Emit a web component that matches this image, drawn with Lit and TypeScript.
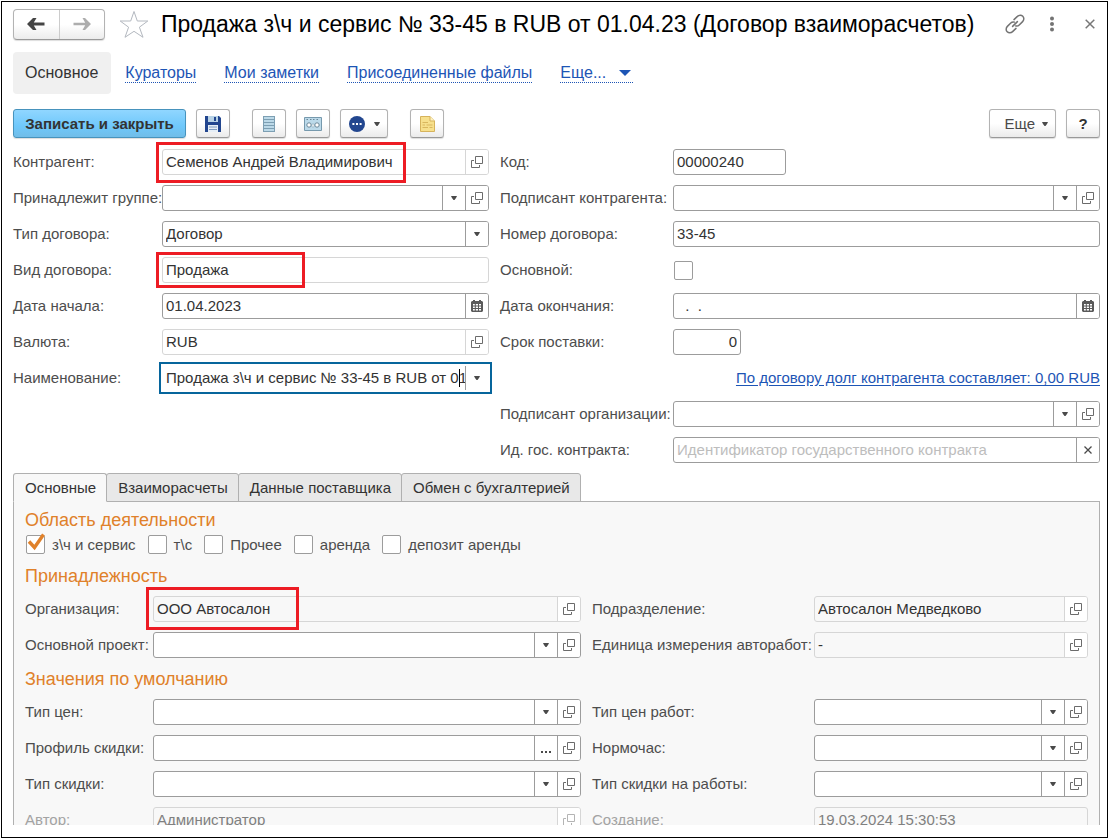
import { LitElement, html, css, nothing, TemplateResult } from "lit";
import { customElement, property, state } from "lit/decorators.js";
import { classMap } from "lit/directives/class-map.js";
import { styleMap } from "lit/directives/style-map.js";

type Part = "drop" | "open" | "calendar" | "dots" | "clear";

interface Mark {
  top: number;
  left: number;
  width: number;
  height: number;
}

interface FieldSpec {
  label: string;
  value?: string;
  kind?: "text" | "select" | "check" | "link";
  parts?: Part[];
  readonly?: boolean;
  disabled?: boolean;
  focused?: boolean;
  placeholder?: string;
  size?: "code" | "number";
  mark?: Mark;
}

const icons: Record<string, TemplateResult> = {
  drop: html`<svg width="6" height="4" viewBox="0 0 6 4" aria-hidden="true">
    <path d="M0 0H6L5 2L3.5 4H2.5L1 2Z" fill="#4a4a4a" />
  </svg>`,
  open: html`<svg width="12" height="12" viewBox="0 0 12 12" fill="none" stroke="#6b6b6b" aria-hidden="true">
    <path d="M4.5 .5H11.5V7.5H4.5ZM3 4.5H.5V11.5H8.5V9" />
  </svg>`,
  calendar: html`<svg width="12" height="12" viewBox="0 0 12 12" aria-hidden="true">
    <path d="M1 1H2V0H4V1H8V0H10V1H11L12 2V11L11 12H1L0 11V2Z" fill="#5a5a5a" />
    <path d="M2 4H10V5.5H2ZM2 6.5H10V8H2ZM2 9H10V10.5H2Z" fill="#fff" />
    <path d="M3.8 4H4.8V11H3.8ZM7 4H8V11H7Z" fill="#5a5a5a" />
  </svg>`,
  dots: html`<svg width="10" height="12" viewBox="0 0 10 12" fill="#4a4a4a" aria-hidden="true">
    <path d="M0 9H2V11H0ZM4 9H6V11H4ZM8 9H10V11H8Z" />
  </svg>`,
  clear: html`<svg width="8" height="8" viewBox="0 0 8 8" stroke="#4a4a4a" stroke-width="1.3" aria-hidden="true">
    <path d="M.5 .5L7.5 7.5M7.5 .5L.5 7.5" />
  </svg>`,
  back: html`<svg width="18" height="14" viewBox="0 0 18 14" aria-hidden="true">
    <path d="M0 7L6 1H9.5L6.8 5.5H17.5V8.5H6.8L9.5 13H6Z" fill="#444" />
  </svg>`,
  forward: html`<svg width="18" height="14" viewBox="0 0 18 14" aria-hidden="true">
    <path d="M18 7L12 1H9.5L12.2 5.7H.5V8.3H12.2L9.5 13H12Z" fill="#adadad" />
  </svg>`,
  star: html`<svg width="30" height="29" viewBox="0 0 30 29" aria-hidden="true">
    <path d="M15 1.5L18.3 11H28.8L20.4 17.2L24 27.3L15 21.3L6 27.3L9.6 17.2L1.2 11H11.7Z"
      fill="#fff" stroke="#b3b8bf" />
  </svg>`,
  chain: html`<svg width="20" height="20" viewBox="0 0 20 20" fill="none" stroke="#737373" stroke-width="1.5"
    stroke-linecap="round" aria-hidden="true">
    <path d="M9 5.6L12.4 2.4C14 .8 16.4 .8 17.8 2.2C19.2 3.6 19.2 6 17.6 7.6L14.2 11C13.2 12 11.8 12.3 10.6 11.9" />
    <path d="M11 14.4L7.6 17.6C6 19.2 3.6 19.2 2.2 17.8C.8 16.4 .8 14 2.4 12.4L5.8 9C6.8 8 8.2 7.7 9.4 8.1" />
    <path d="M7.6 12.4L12.4 7.6" />
  </svg>`,
  kebab: html`<svg width="6" height="16" viewBox="0 0 6 16" fill="#737373" aria-hidden="true">
    <circle cx="3" cy="2.5" r="2" /><circle cx="3" cy="8" r="2" /><circle cx="3" cy="13.5" r="2" />
  </svg>`,
  close: html`<svg width="10" height="10" viewBox="0 0 10 10" stroke="#777" stroke-width="1.5" aria-hidden="true">
    <path d="M.7 .7L9.3 9.3M9.3 .7L.7 9.3" />
  </svg>`,
  save: html`<svg width="16" height="16" viewBox="0 0 16 16" aria-hidden="true">
    <path d="M0 0H14L16 2V16H0Z" fill="#22468f" />
    <path d="M3 0H13V6H3Z" fill="#b9d3e6" />
    <path d="M9 1H11V5H9Z" fill="#22468f" />
    <path d="M3 9H13V16H3Z" fill="#e6eef6" />
    <path d="M4 10.5H12V11.5H4ZM4 13H12V14H4Z" fill="#7f9cbf" />
  </svg>`,
  stack: html`<svg width="12" height="16" viewBox="0 0 12 16" aria-hidden="true">
    <path d="M0 0H12V16H0Z" fill="#7d9fb3" />
    <path d="M1 1H11V3H1ZM1 4H11V6H1ZM1 7H11V9H1ZM1 10H11V12H1ZM1 13H11V15H1Z" fill="#bcd9e8" />
  </svg>`,
  cassette: html`<svg width="18" height="14" viewBox="0 0 18 14" aria-hidden="true">
    <path d="M.5 .5H17.5V13.5H.5Z" fill="#bcdaea" stroke="#7699ad" />
    <path d="M2.5 2.5H4M6 2.5H7.5M9 2.5H10.5M12.5 2.5H14" stroke="#6b8798" />
    <circle cx="5" cy="8" r="2.2" fill="#fff" stroke="#6b8798" />
    <circle cx="13" cy="8" r="2.2" fill="#fff" stroke="#6b8798" />
    <path d="M8 7H10V10H8Z" fill="#fff" stroke="#8aa9bb" stroke-width=".6" />
  </svg>`,
  more: html`<svg width="16" height="16" viewBox="0 0 16 16" aria-hidden="true">
    <circle cx="8" cy="8" r="8" fill="#22468f" />
    <path d="M3.4 7H5.4V9H3.4ZM7 7H9V9H7ZM10.6 7H12.6V9H10.6Z" fill="#fff" />
  </svg>`,
  note: html`<svg width="15" height="16" viewBox="0 0 15 16" aria-hidden="true">
    <path d="M.5 .5H10L14.5 5V15.5H.5Z" fill="#f7e08c" stroke="#d6b35c" />
    <path d="M10 .5V5H14.5" fill="#fff3c4" stroke="#d6b35c" />
    <path d="M2.5 6.5H8M2.5 9H5M6.5 9H12.5M2.5 11.5H8M9.5 11.5H12.5" stroke="#d9b75e" />
  </svg>`,
  menu: html`<svg width="12" height="6" viewBox="0 0 12 6" aria-hidden="true">
    <path d="M0 0H12L6 6Z" fill="#1d55b5" />
  </svg>`,
  tick: html`<svg width="18" height="19" viewBox="0 0 18 19" aria-hidden="true">
    <path d="M2 8.5L7.5 14.5L16.5 1.5" fill="none" stroke="#e0812a" stroke-width="3.4" />
  </svg>`,
};

const partTitles: Record<Part, string> = {
  drop: "Выбрать из списка",
  open: "Открыть",
  calendar: "Календарь",
  dots: "Выбрать",
  clear: "Очистить",
};

let lastId = 0;

@customElement("form-field")
export class FormField extends LitElement {
  @property({ attribute: false }) spec!: FieldSpec;

  private fieldId = `field-${++lastId}`;

  static styles = css`
    :host {
      display: flex;
      align-items: center;
      min-width: 0;
      height: 26px;
      font: 15px/24px "Liberation Sans", Arial, sans-serif;
      color: #333;
    }
    .label {
      flex: none;
      width: var(--label-width);
      color: #4d4d4d;
      white-space: nowrap;
    }
    .label.disabled {
      color: #a3a3a3;
    }
    .box {
      position: relative;
      display: flex;
      flex: 1;
      min-width: 0;
      height: 26px;
      box-sizing: border-box;
      border: 1px solid #9c9c9c;
      border-radius: 3px;
      background: #fff;
    }
    .box.code {
      flex: none;
      width: 113px;
    }
    .box.number {
      flex: none;
      width: 68px;
    }
    .box.number .control {
      text-align: right;
    }
    .box.readonly {
      border-color: #d6d6d6;
      background: transparent;
    }
    .box.focused {
      border-color: transparent;
      border-radius: 0;
      outline: 2px solid #06659c;
      outline-offset: 1px;
    }
    .box.focused .control {
      padding-right: 0;
    }
    .control {
      flex: 1;
      min-width: 0;
      height: 24px;
      margin: 0;
      padding: 0 3px;
      border: 0;
      outline: 0;
      appearance: none;
      background: transparent;
      font: inherit;
      color: inherit;
    }
    .control::placeholder {
      color: #bdbdbd;
      opacity: 1;
    }
    .box.disabled .control {
      color: #808080;
    }
    .part {
      display: flex;
      flex: none;
      align-items: center;
      justify-content: center;
      width: 23px;
      height: 24px;
      box-sizing: border-box;
      margin: 0;
      padding: 0;
      border: 0;
      border-left: 1px solid #9c9c9c;
      background: #fff;
    }
    .part:last-of-type {
      border-radius: 0 2px 2px 0;
    }
    .readonly .part {
      border-color: #d6d6d6;
    }
    .disabled .part svg {
      opacity: 0.5;
    }
    .mark {
      position: absolute;
      box-sizing: border-box;
      border: 3px solid #ed1c24;
      pointer-events: none;
    }
    .caret {
      position: absolute;
      top: 3px;
      right: 28px;
      width: 1px;
      height: 18px;
      background: #000;
    }
    .check {
      width: 19px;
      height: 19px;
      margin: 0;
      box-sizing: border-box;
      appearance: none;
      border: 1px solid #9c9c9c;
      border-radius: 2px;
      background: #fff;
    }
    .check-wrap {
      display: flex;
      padding-left: 1px;
    }
    .debt {
      margin-left: auto;
      color: #1d55b5;
      text-underline-offset: 2px;
      white-space: nowrap;
    }
  `;

  private renderPart(part: Part) {
    const decorative = part === "drop" && this.spec.kind === "select";
    return decorative
      ? html`<span class="part">${icons[part]}</span>`
      : html`<button class="part" type="button" aria-label=${partTitles[part]}>${icons[part]}</button>`;
  }

  private renderControl() {
    const s = this.spec;
    if (s.kind === "select") {
      return html`<select class="control" id=${this.fieldId}>
        <option>${s.value ?? ""}</option>
      </select>`;
    }
    return html`<input
      class="control"
      id=${this.fieldId}
      type="text"
      .value=${s.value ?? ""}
      placeholder=${s.placeholder ?? nothing}
      ?readonly=${s.readonly}
      ?disabled=${s.disabled}
    />`;
  }

  render() {
    const s = this.spec;
    if (s.kind === "link") return html`<a class="debt" href="#debt">${s.label}</a>`;
    const label = html`<label class=${classMap({ label: true, disabled: !!s.disabled })} for=${this.fieldId}
      >${s.label}</label
    >`;
    if (s.kind === "check") {
      return html`${label}<span class="check-wrap"><input class="check" id=${this.fieldId} type="checkbox" /></span>`;
    }
    const m = s.mark;
    return html`${label}
      <div
        class=${classMap({
          box: true,
          readonly: !!s.readonly || !!s.disabled,
          disabled: !!s.disabled,
          focused: !!s.focused,
          [s.size ?? "wide"]: true,
        })}
      >
        ${this.renderControl()}${(s.parts ?? []).map((p) => this.renderPart(p))}
        ${s.focused ? html`<span class="caret"></span>` : nothing}
        ${m
          ? html`<span
              class="mark"
              style=${styleMap({
                top: `${m.top}px`,
                left: `${m.left}px`,
                width: `${m.width}px`,
                height: `${m.height}px`,
              })}
            ></span>`
          : nothing}
      </div>`;
  }
}

const headLeft: FieldSpec[] = [
  {
    label: "Контрагент:",
    value: "Семенов Андрей Владимирович",
    readonly: true,
    parts: ["open"],
    mark: { top: -8, left: -7, width: 250, height: 41 },
  },
  { label: "Принадлежит группе:", kind: "select", parts: ["drop", "open"] },
  { label: "Тип договора:", kind: "select", value: "Договор", parts: ["drop"] },
  {
    label: "Вид договора:",
    value: "Продажа",
    readonly: true,
    mark: { top: -6, left: -7, width: 149, height: 36 },
  },
  { label: "Дата начала:", value: "01.04.2023", parts: ["calendar"] },
  { label: "Валюта:", value: "RUB", readonly: true, parts: ["open"] },
  {
    label: "Наименование:",
    value: "Продажа з\\ч и сервис № 33-45 в RUB от 01.04.23",
    focused: true,
    parts: ["drop"],
  },
];

const headRight: FieldSpec[] = [
  { label: "Код:", value: "00000240", size: "code" },
  { label: "Подписант контрагента:", kind: "select", parts: ["drop", "open"] },
  { label: "Номер договора:", value: "33-45" },
  { label: "Основной:", kind: "check" },
  { label: "Дата окончания:", value: "  .  .", parts: ["calendar"] },
  { label: "Срок поставки:", value: "0", size: "number" },
  { label: "По договору долг контрагента составляет: 0,00 RUB", kind: "link" },
  { label: "Подписант организации:", kind: "select", parts: ["drop", "open"] },
  { label: "Ид. гос. контракта:", placeholder: "Идентификатор государственного контракта", parts: ["clear"] },
];

const ownerLeft: FieldSpec[] = [
  {
    label: "Организация:",
    value: "ООО Автосалон",
    readonly: true,
    parts: ["open"],
    mark: { top: -10, left: -8, width: 153, height: 43 },
  },
  { label: "Основной проект:", kind: "select", parts: ["drop", "open"] },
];

const ownerRight: FieldSpec[] = [
  { label: "Подразделение:", value: "Автосалон Медведково", readonly: true, parts: ["open"] },
  { label: "Единица измерения авторабот:", value: "-", readonly: true, parts: ["open"] },
];

const defaultsLeft: FieldSpec[] = [
  { label: "Тип цен:", kind: "select", parts: ["drop", "open"] },
  { label: "Профиль скидки:", parts: ["dots", "open"] },
  { label: "Тип скидки:", kind: "select", parts: ["drop", "open"] },
  { label: "Автор:", value: "Администратор", disabled: true, parts: ["open"] },
];

const defaultsRight: FieldSpec[] = [
  { label: "Тип цен работ:", kind: "select", parts: ["drop", "open"] },
  { label: "Нормочас:", kind: "select", parts: ["drop", "open"] },
  { label: "Тип скидки на работы:", kind: "select", parts: ["drop", "open"] },
  { label: "Создание:", value: "19.03.2024 15:30:53", disabled: true },
];

const tabs = ["Основные", "Взаиморасчеты", "Данные поставщика", "Обмен с бухгалтерией"];
const links = ["Кураторы", "Мои заметки", "Присоединенные файлы"];
const areas = ["з\\ч и сервис", "т\\с", "Прочее", "аренда", "депозит аренды"];

@customElement("app-root")
export class AppRoot extends LitElement {
  @state() private activeTab = 0;
  @state() private checked = new Set<number>([0]);

  static styles = css`
    :host {
      display: block;
      height: 100vh;
      box-sizing: border-box;
      padding: 1px 0 1px 1px;
      background: #fff;
      font: 15px/24px "Liberation Sans", Arial, sans-serif;
      color: #333;
    }
    .window {
      display: flex;
      flex-direction: column;
      height: 100%;
      box-sizing: border-box;
      padding: 7px 7px 12px 11px;
      border: 1px solid #000;
    }
    button {
      font: inherit;
      color: inherit;
    }
    .header,
    .commands,
    .nav {
      display: flex;
      flex: none;
      align-items: center;
    }
    .header {
      height: 30px;
    }
    .history {
      display: flex;
      flex: none;
      width: 92px;
      height: 31px;
      box-sizing: border-box;
      border: 1px solid #b3b3b3;
      border-bottom-color: #999;
      border-radius: 4px;
      background: linear-gradient(#fff 50%, #ececec);
      box-shadow: 0 1px 1px #ddd;
    }
    .step {
      display: flex;
      flex: 1;
      align-items: center;
      justify-content: center;
      padding: 0;
      border: 0;
      background: none;
    }
    .step + .step {
      border-left: 1px solid #ccc;
    }
    .plain {
      display: flex;
      flex: none;
      align-items: center;
      justify-content: center;
      padding: 0;
      border: 0;
      background: none;
    }
    .favorite {
      margin: 0 12px 0 14px;
    }
    .title {
      flex: 1;
      min-width: 0;
      margin: 0;
      overflow: hidden;
      font-size: 23px;
      line-height: 30px;
      font-weight: 400;
      color: #000;
      white-space: nowrap;
    }
    .tools {
      display: flex;
      flex: none;
      align-items: center;
      gap: 24px;
      padding-right: 5px;
    }
    .tools .plain:last-child {
      margin-left: 6px;
    }
    .nav {
      gap: 28px;
      height: 42px;
      margin-top: 13px;
      font-size: 16px;
    }
    .current {
      margin-right: -14px;
      padding: 9px 13px 9px 12px;
      border-radius: 4px;
      background: #f0f0f0;
    }
    .nav-link {
      display: flex;
      align-items: center;
      gap: 13px;
      height: 18px;
      line-height: 18px;
      border-bottom: 1px dotted #1d55b5;
      color: #1d55b5;
      text-decoration: none;
      white-space: nowrap;
    }
    .nav-link svg {
      margin-right: 2px;
    }
    .commands {
      gap: 10px;
      margin: 15px 0 11px;
    }
    .command {
      display: flex;
      align-items: center;
      justify-content: center;
      min-width: 34px;
      height: 29px;
      box-sizing: border-box;
      padding: 0 7px;
      border: 1px solid #b3b3b3;
      border-bottom-color: #999;
      border-radius: 3px;
      background: linear-gradient(#fff 50%, #ebebeb);
      box-shadow: 0 1px 1px #ddd;
      color: #4a4a4a;
      white-space: nowrap;
    }
    .command.primary {
      width: 173px;
      border-color: #4793bd;
      background: linear-gradient(#90d6ff, #6fc8fb 60%, #71bde8);
      font-weight: 700;
      color: #333;
    }
    .command.menu {
      gap: 9px;
      padding: 0 7px 0 8px;
    }
    .command.menu.text {
      gap: 7px;
      padding-left: 14px;
    }
    .command.help {
      color: #333;
      font-weight: 700;
    }
    .group {
      display: flex;
      gap: 10px;
      margin-left: 12px;
    }
    .group.end {
      margin-left: auto;
    }
    .columns {
      display: grid;
      flex: none;
      gap: 11px;
    }
    .columns.head {
      grid-template-columns: minmax(0, 476fr) minmax(0, 600fr);
    }
    .columns.inner {
      grid-template-columns: minmax(0, 556fr) minmax(0, 496fr);
    }
    .column {
      display: flex;
      flex-direction: column;
      gap: 10px;
      min-width: 0;
    }
    .head .column {
      --label-width: 149px;
    }
    .head .column + .column {
      --label-width: 173px;
    }
    .inner .column {
      --label-width: 128px;
    }
    .inner .column + .column {
      --label-width: 222px;
    }
    .tabs {
      display: flex;
      flex: none;
      margin-top: 10px;
    }
    .tab {
      height: 29px;
      box-sizing: border-box;
      margin: 0 -1px -1px 0;
      padding: 0 10px 0 11px;
      border: 1px solid #b0b0b0;
      border-radius: 3px 3px 0 0;
      background: #e8e8e8;
      white-space: nowrap;
    }
    .tab.active {
      border-bottom-color: #f8f8f8;
      background: #f8f8f8;
      position: relative;
    }
    .panel {
      flex: 1;
      min-height: 0;
      overflow: hidden;
      padding: 6px 11px 0;
      border: 1px solid #b0b0b0;
      border-bottom: 0;
      background: #f8f8f8;
    }
    .section {
      margin: 9px 0 8px;
      font-size: 18px;
      line-height: 24px;
      font-weight: 400;
      color: #e0812a;
    }
    .section.first {
      margin: 0 0 3px;
    }
    .areas {
      display: flex;
      gap: 12px;
      margin: 0 0 10px 1px;
    }
    .area {
      display: flex;
      align-items: center;
      gap: 7px;
      height: 19px;
      color: #4d4d4d;
    }
    .area-box {
      position: relative;
      display: flex;
    }
    .area-box svg {
      position: absolute;
      left: 1px;
      top: -2px;
      pointer-events: none;
    }
    .area-check {
      width: 19px;
      height: 19px;
      box-sizing: border-box;
      margin: 0;
      appearance: none;
      border: 1px solid #9c9c9c;
      border-radius: 2px;
      background: #fff;
    }
  `;

  private column(fields: FieldSpec[]) {
    return html`<div class="column">${fields.map((f) => html`<form-field .spec=${f}></form-field>`)}</div>`;
  }

  private toggle(index: number) {
    const next = new Set(this.checked);
    if (!next.delete(index)) next.add(index);
    this.checked = next;
  }

  render() {
    return html`<main class="window">
      <header class="header">
        <div class="history">
          <button class="step" type="button" aria-label="Назад">${icons.back}</button>
          <button class="step" type="button" aria-label="Вперед">${icons.forward}</button>
        </div>
        <button class="plain favorite" type="button" aria-label="Избранное">${icons.star}</button>
        <h1 class="title">Продажа з\\ч и сервис № 33-45 в RUB от 01.04.23 (Договор взаиморасчетов)</h1>
        <div class="tools">
          <button class="plain" type="button" aria-label="Ссылка">${icons.chain}</button>
          <button class="plain" type="button" aria-label="Меню">${icons.kebab}</button>
          <button class="plain" type="button" aria-label="Закрыть">${icons.close}</button>
        </div>
      </header>

      <nav class="nav">
        <span class="current">Основное</span>
        ${links.map((text) => html`<a class="nav-link" href="#">${text}</a>`)}
        <a class="nav-link" href="#">Еще... ${icons.menu}</a>
      </nav>

      <div class="commands">
        <button class="command primary" type="button">Записать и закрыть</button>
        <button class="command" type="button" aria-label="Записать">${icons.save}</button>
        <div class="group">
          <button class="command" type="button" aria-label="Структура">${icons.stack}</button>
          <button class="command" type="button" aria-label="Касса">${icons.cassette}</button>
          <button class="command menu" type="button" aria-label="Действия">${icons.more}${icons.drop}</button>
        </div>
        <div class="group">
          <button class="command" type="button" aria-label="Заметка">${icons.note}</button>
        </div>
        <div class="group end">
          <button class="command menu text" type="button">Еще ${icons.drop}</button>
          <button class="command help" type="button">?</button>
        </div>
      </div>

      <div class="columns head">${this.column(headLeft)}${this.column(headRight)}</div>

      <div class="tabs" role="tablist">
        ${tabs.map(
          (text, i) => html`<button
            class=${classMap({ tab: true, active: i === this.activeTab })}
            type="button"
            role="tab"
            aria-selected=${i === this.activeTab}
            @click=${() => (this.activeTab = i)}
          >
            ${text}
          </button>`
        )}
      </div>

      <section class="panel" role="tabpanel">
        <h2 class="section first">Область деятельности</h2>
        <div class="areas">
          ${areas.map(
            (text, i) => html`<label class="area">
              <span class="area-box">
                <input
                  class="area-check"
                  type="checkbox"
                  .checked=${this.checked.has(i)}
                  @change=${() => this.toggle(i)}
                />
                ${this.checked.has(i) ? icons.tick : nothing}
              </span>
              ${text}
            </label>`
          )}
        </div>
        <h2 class="section">Принадлежность</h2>
        <div class="columns inner">${this.column(ownerLeft)}${this.column(ownerRight)}</div>
        <h2 class="section">Значения по умолчанию</h2>
        <div class="columns inner">${this.column(defaultsLeft)}${this.column(defaultsRight)}</div>
      </section>
    </main>`;
  }
}
